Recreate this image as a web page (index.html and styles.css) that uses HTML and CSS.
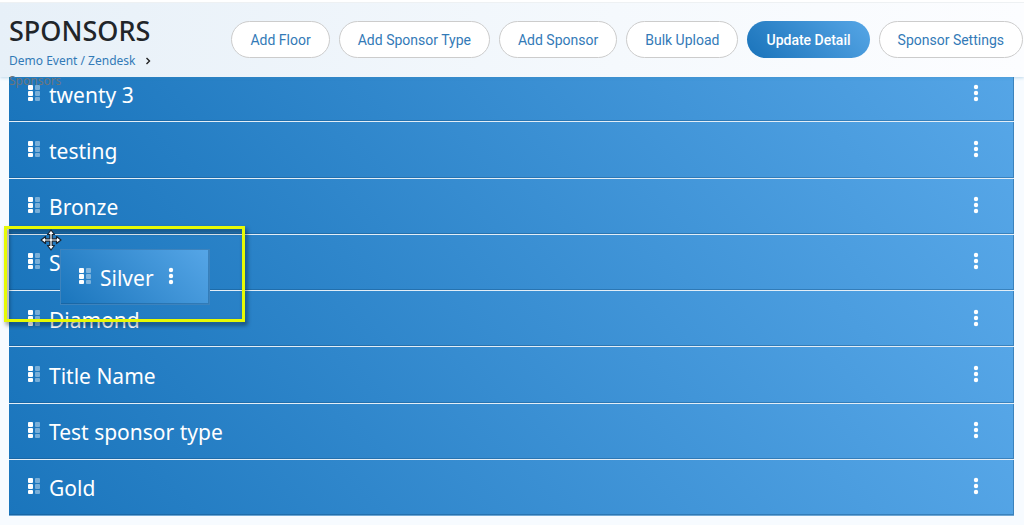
FILE: index.html
```html
<!DOCTYPE html>
<html lang="en">
<head>
    <meta charset="utf-8">
    <title>Sponsors</title>
    <link rel="stylesheet" href="styles.css">
</head>
<body>
    <!-- shared icons -->
    <svg class="icon-defs" width="0" height="0">
        <symbol id="grip" viewBox="0 0 14 18">
            <g fill="#fff">
                <rect x="1" y="1" width="5" height="5" rx="1"/>
                <rect x="1" y="7" width="5" height="5" rx="1"/>
                <rect x="1" y="13" width="5" height="4" rx="1"/>
            </g>
            <g fill="#fff" fill-opacity=".4">
                <rect x="8" y="1" width="5" height="5" rx="1"/>
                <rect x="8" y="7" width="5" height="5" rx="1"/>
                <rect x="8" y="13" width="5" height="4" rx="1"/>
            </g>
        </symbol>
        <symbol id="dots" viewBox="0 0 6 18">
            <g fill="#fff">
                <circle cx="3" cy="3" r="2.2"/>
                <circle cx="3" cy="9" r="2.2"/>
                <circle cx="3" cy="15" r="2.2"/>
            </g>
        </symbol>
    </svg>

    <header class="page-header">
        <div class="page-title">
            <h1>SPONSORS</h1>
            <nav class="breadcrumb">
                <a href="#">Demo Event / Zendesk</a>
                <svg class="chevron" viewBox="0 0 6 8"><path d="M1.5 1 4.5 4 1.5 7" fill="none" stroke="#222" stroke-width="1.4"/></svg>
                <span class="current">Sponsors</span>
            </nav>
        </div>
        <div class="actions">
            <button type="button" class="btn">Add Floor</button>
            <button type="button" class="btn">Add Sponsor Type</button>
            <button type="button" class="btn">Add Sponsor</button>
            <button type="button" class="btn">Bulk Upload</button>
            <button type="button" class="btn btn-primary">Update Detail</button>
            <button type="button" class="btn">Sponsor Settings</button>
        </div>
    </header>

    <main class="type-list">
        <div class="type-row">
            <svg class="grip"><use href="#grip"/></svg>
            <span class="type-name">twenty 3</span>
            <button type="button" class="menu" aria-label="Options"><svg><use href="#dots"/></svg></button>
        </div>
        <div class="type-row">
            <svg class="grip"><use href="#grip"/></svg>
            <span class="type-name">testing</span>
            <button type="button" class="menu" aria-label="Options"><svg><use href="#dots"/></svg></button>
        </div>
        <div class="type-row">
            <svg class="grip"><use href="#grip"/></svg>
            <span class="type-name">Bronze</span>
            <button type="button" class="menu" aria-label="Options"><svg><use href="#dots"/></svg></button>
        </div>
        <div class="type-row">
            <svg class="grip"><use href="#grip"/></svg>
            <span class="type-name">Silver</span>
            <button type="button" class="menu" aria-label="Options"><svg><use href="#dots"/></svg></button>
        </div>
        <div class="type-row">
            <svg class="grip"><use href="#grip"/></svg>
            <span class="type-name">Diamond</span>
            <button type="button" class="menu" aria-label="Options"><svg><use href="#dots"/></svg></button>
        </div>
        <div class="type-row">
            <svg class="grip"><use href="#grip"/></svg>
            <span class="type-name">Title Name</span>
            <button type="button" class="menu" aria-label="Options"><svg><use href="#dots"/></svg></button>
        </div>
        <div class="type-row">
            <svg class="grip"><use href="#grip"/></svg>
            <span class="type-name">Test sponsor type</span>
            <button type="button" class="menu" aria-label="Options"><svg><use href="#dots"/></svg></button>
        </div>
        <div class="type-row">
            <svg class="grip"><use href="#grip"/></svg>
            <span class="type-name">Gold</span>
            <button type="button" class="menu" aria-label="Options"><svg><use href="#dots"/></svg></button>
        </div>
    </main>

    <!-- row being dragged -->
    <div class="type-row dragging">
        <svg class="grip"><use href="#grip"/></svg>
        <span class="type-name">Silver</span>
        <button type="button" class="menu" aria-label="Options"><svg><use href="#dots"/></svg></button>
    </div>
    <div class="highlight"></div>
    <svg class="move-cursor" viewBox="0 0 22 22">
        <path d="M11 1 14.5 5.5H12.2V9.8H16.5V7.5L21 11 16.5 14.5V12.2H12.2V16.5H14.5L11 21 7.5 16.5H9.8V12.2H5.5V14.5L1 11 5.5 7.5V9.8H9.8V5.5H7.5Z" fill="#fff" stroke="#182533" stroke-width="1.2" stroke-linejoin="round"/>
    </svg>
</body>
</html>
```
FILE: styles.css
```css
* {
    box-sizing: border-box;
}

body {
    margin: 0;
    min-height: 100vh;
    display: flex;
    flex-direction: column;
    position: relative;
    background-color: #f7fbff;
    font-family: "Noto Sans", "Open Sans", sans-serif;
}

.icon-defs {
    position: absolute;
}

/* header */
.page-header {
    position: sticky;
    top: 0;
    z-index: 2;
    height: 77px;
    display: flex;
    align-items: flex-start;
    justify-content: space-between;
    padding: 0 1px 0 9px;
    border-top: 2px solid #fff;
    background: linear-gradient(90deg, #e7f0f8, #f5f9fd 60%, #fcfdff);
    background-clip: padding-box;
    box-shadow: 0 1px 3px rgba(60, 140, 190, 0.3), inset 0 1px 0 #eef1f3;
}

.page-title {
    width: 160px;
}

.page-title h1 {
    margin: 11px 0 0;
    font-size: 27px;
    line-height: 36px;
    font-weight: 500;
    color: #212529;
}

.breadcrumb {
    margin-top: 2px;
    font-size: 12px;
    line-height: 20px;
}

.breadcrumb a {
    color: #337ab7;
    text-decoration: none;
}

.chevron {
    width: 6px;
    height: 8px;
    margin-left: 6px;
}

.current {
    display: block;
    color: #6c757d;
}

.actions {
    display: flex;
    gap: 9px;
    margin-top: 19px;
}

.btn {
    height: 37px;
    padding: 0 18px;
    border: 1px solid #ccc;
    border-radius: 19px;
    background-color: #fff;
    color: #337ab7;
    font-family: Roboto, sans-serif;
    font-size: 14px;
    white-space: nowrap;
    cursor: pointer;
}

.btn-primary {
    border: none;
    padding: 0 19px;
    background: linear-gradient(45deg, #1a73ba, #56a6e6);
    color: #fff;
    font-weight: 500;
}

/* sponsor types, first row is scrolled partly under the header */
.type-list {
    flex: 1;
    display: grid;
    grid-auto-rows: 1fr;
    margin: -11px 10px 9px 9px;
}

.type-row {
    display: flex;
    align-items: center;
    min-height: 56px;
    padding: 2px 35px 0 18px;
    border-bottom: 1px solid #e3eef7;
    background: linear-gradient(45deg, #1a75bc, #56a6e7);
    box-shadow: inset -1px -1px 0 rgba(20, 80, 130, 0.4);
    color: #fff;
}

.type-list .type-row:last-child {
    border-bottom-color: #6fa6d2;
}

.grip {
    width: 14px;
    height: 18px;
    margin-bottom: 4px;
}

.type-name {
    margin-left: 8px;
    font-size: 21px;
    line-height: 30px;
}

.menu {
    display: flex;
    margin: 0 0 4px auto;
    padding: 0;
    border: none;
    background: none;
    cursor: pointer;
}

.menu svg {
    width: 6px;
    height: 18px;
}

/* drag state */
.dragging {
    position: absolute;
    left: 60px;
    top: 249px;
    height: 56px;
    padding-left: 17px;
    border: 1px solid #3d83bd;
}

.dragging .menu {
    margin-left: 14px;
}

.highlight {
    position: absolute;
    left: 4px;
    top: 226px;
    width: 241px;
    height: 96px;
    border: 3px solid #e6fa05;
    filter: drop-shadow(2px 3px 2px rgba(0, 0, 0, 0.5));
    pointer-events: none;
}

.move-cursor {
    position: absolute;
    left: 40px;
    top: 229px;
    width: 22px;
    height: 22px;
}
```
